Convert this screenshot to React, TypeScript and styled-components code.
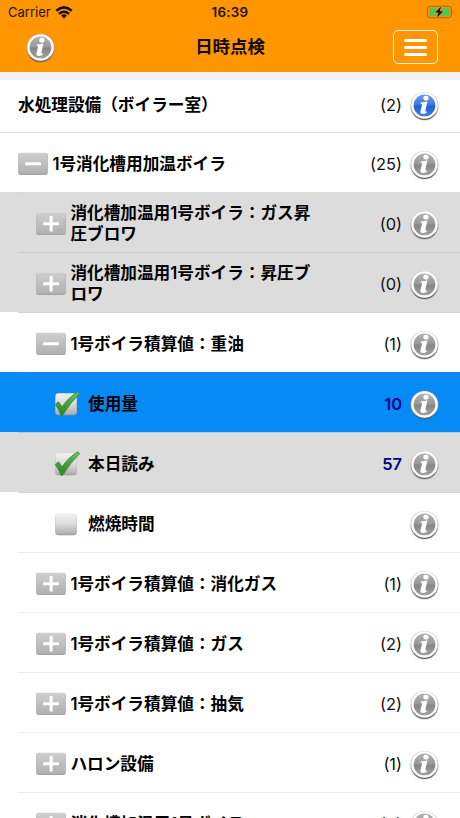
import React from 'react';
import styled, { createGlobalStyle } from 'styled-components';

const GlobalStyle = createGlobalStyle`
  * { box-sizing: border-box; }
  body {
    margin: 0;
    background: #fff;
    color: #000;
    font-family: Inter, "Noto Sans CJK JP", sans-serif;
    overflow: hidden;
  }
  svg { display: block; }
`;

const Screen = styled.div`
  width: 460px;
  height: 818px;
  overflow: hidden;
  background: #fff;
`;

const Header = styled.header`
  height: 72px;
  background: #ff9500;
`;

const StatusBar = styled.div`
  height: 24px;
  display: grid;
  grid-template-columns: 1fr 38px 1fr;
  align-items: center;
  padding: 0 5px 0 5px;
  font-size: 13px;
  line-height: 24px;
`;

const Carrier = styled.div`
  display: flex;
  align-items: center;
  gap: 4px;
  padding-left: 3px;
  color: #1f1200;
`;

const Clock = styled.div`
  font-weight: 600;
  font-size: 13.3px;
  letter-spacing: 0.3px;
  text-align: center;
  color: #1f1200;
`;

const BatterySlot = styled.div`
  justify-self: end;
`;

const NavBar = styled.div`
  height: 48px;
  display: grid;
  grid-template-columns: 1fr auto 1fr;
  align-items: center;
  padding: 0 22px 2px 22px;
`;

const NavInfo = styled.div`
  padding: 2px 0 0 4px;
`;

const Title = styled.h1`
  margin: 0;
  font-size: 17.4px;
  line-height: 24px;
  font-weight: 600;
  color: #140b00;
`;

const MenuButton = styled.button`
  justify-self: end;
  width: 45px;
  height: 34px;
  padding: 0;
  display: flex;
  flex-direction: column;
  align-items: center;
  justify-content: center;
  gap: 4px;
  border: 1px solid #fff4e3;
  border-radius: 5px;
  background: transparent;
`;

const MenuBar = styled.span`
  width: 23px;
  height: 3px;
  border-radius: 1.5px;
  background: #fff;
`;

const Gap = styled.div`
  height: 8px;
  background: #efeff4;
`;

const Row = styled.div<{ $bg: string; $h: number; $indent: number; $line: string; $inset: number; $top: number; $bottom: number }>`
  height: ${(p) => p.$h}px;
  display: flex;
  align-items: center;
  padding: ${(p) => p.$top}px 21px ${(p) => p.$bottom}px ${(p) => p.$indent}px;
  background-color: ${(p) => p.$bg};
  background-image: linear-gradient(${(p) => p.$line}, ${(p) => p.$line});
  background-repeat: no-repeat;
  background-size: 100% 1px;
  background-position: ${(p) => p.$inset}px 0;
`;

const ToggleSlot = styled.div`
  width: 34.4px;
  flex: none;
`;

const CheckSlot = styled.div`
  width: 34px;
  flex: none;
`;

const Label = styled.div`
  width: 248px;
  font-size: 16.65px;
  line-height: 21px;
  font-weight: 600;
  line-break: anywhere;
`;

const Count = styled.div<{ $value: boolean }>`
  margin-left: auto;
  margin-right: 8px;
  font-size: 16.4px;
  line-height: 20px;
  font-weight: ${(p) => (p.$value ? 600 : 400)};
  color: ${(p) => (p.$value ? '#00008b' : '#111')};
`;

const InfoSlot = styled.div`
  flex: none;
  padding-top: 2px;
  width: 29px;
`;

const Hidden = styled.div`
  height: 0;
  overflow: hidden;
`;

const Defs = () => (
  <svg width="0" height="0">
    <defs>
      <linearGradient id="ring" x1="0" y1="0" x2="0" y2="1">
        <stop offset="0" stopColor="#c4c4c4" />
        <stop offset="0.6" stopColor="#a4a4a4" />
        <stop offset="1" stopColor="#5c5c5c" />
      </linearGradient>
      <linearGradient id="grayDisc" x1="0" y1="0" x2="0" y2="1">
        <stop offset="0" stopColor="#b2b2b2" />
        <stop offset="0.48" stopColor="#989898" />
        <stop offset="0.52" stopColor="#858585" />
        <stop offset="1" stopColor="#a0a0a0" />
      </linearGradient>
      <linearGradient id="blueDisc" x1="0" y1="0" x2="0" y2="1">
        <stop offset="0" stopColor="#6c9ee6" />
        <stop offset="0.48" stopColor="#3c78d8" />
        <stop offset="0.52" stopColor="#1f5fd0" />
        <stop offset="1" stopColor="#3b80ec" />
      </linearGradient>
      <linearGradient id="tile" x1="0" y1="0" x2="0" y2="1">
        <stop offset="0" stopColor="#cfcfcf" />
        <stop offset="1" stopColor="#b0b0b0" />
      </linearGradient>
      <linearGradient id="box" x1="0" y1="0" x2="0" y2="1">
        <stop offset="0" stopColor="#f1f1f1" />
        <stop offset="0.5" stopColor="#dcdcdc" />
        <stop offset="1" stopColor="#adadad" />
      </linearGradient>
      <linearGradient id="tick" x1="0" y1="0" x2="0" y2="1">
        <stop offset="0" stopColor="#6cc75c" />
        <stop offset="0.5" stopColor="#3ea43a" />
        <stop offset="1" stopColor="#23851f" />
      </linearGradient>
    </defs>
  </svg>
);

const InfoIcon = ({ blue = false }: { blue?: boolean }) => (
  <svg width="29" height="30" viewBox="0 0 28 29">
    <ellipse cx="14" cy="15.2" rx="13.6" ry="13.6" fill="#000" opacity="0.13" />
    <circle cx="14" cy="14.5" r="13.5" fill="url(#ring)" />
    <circle cx="14" cy="14" r="12.8" fill="#fff" />
    <circle cx="14" cy="14" r="10.5" fill={blue ? 'url(#blueDisc)' : 'url(#grayDisc)'} />
    <ellipse cx="15.4" cy="6.9" rx="2.5" ry="2.3" fill="#fff" />
    <path d="M10.4 11 L16.9 10.2 L14.8 19 Q14.6 20.1 16.3 19.5 L16 21.2 Q13.5 22.7 11.3 22.2 Q9.7 21.7 10.1 19.6 L11.6 13.2 Q11.8 12.3 10.1 12.4 Z" fill="#fff" />
  </svg>
);

const ToggleIcon = ({ open }: { open: boolean }) => (
  <svg width="30" height="24" viewBox="0 0 30 24">
    <rect x="0.3" y="1" width="29.4" height="22" rx="2.2" fill="#9e9e9e" />
    <rect x="0.3" y="0.7" width="29.1" height="21.5" rx="2.2" fill="url(#tile)" />
    <rect x="7.2" y="10.3" width="15.8" height="3" rx="0.5" fill="#fff" />
    {!open && <rect x="13.6" y="4" width="3" height="15.5" rx="0.5" fill="#fff" />}
  </svg>
);

const CheckIcon = ({ checked }: { checked: boolean }) => (
  <svg width="28" height="28" viewBox="0 0 28 28">
    <rect x="1.4" y="4" width="21.3" height="21.3" rx="3.2" fill="#999" />
    <rect x="1.4" y="3.2" width="21.3" height="21.2" rx="3.2" fill="url(#box)" />
    {checked && (
      <path
        d="M1.3 14.4 L4.3 11.7 Q6.6 13.9 8 17.1 Q13.8 7.7 23.8 1.8 L25.8 3.5 Q16.5 12.5 9.2 24.5 L7.2 25.7 Q4.9 19.3 1.3 14.4 Z"
        fill="url(#tick)"
        stroke="#3b7638"
        strokeWidth="0.7"
      />
    )}
  </svg>
);

const WifiIcon = () => (
  <svg width="18" height="13" viewBox="0 0 18 13" fill="none" stroke="#180e00" strokeWidth="2.5">
    <path d="M1.3 4.7 Q9 -1.9 16.7 4.7" />
    <path d="M4 7.9 Q9 3.7 14 7.9" />
    <path d="M9 12.4 L6.1 9.5 Q9 7.2 11.9 9.5 Z" fill="#180e00" stroke="none" />
  </svg>
);

const BatteryIcon = () => (
  <svg width="28" height="14" viewBox="0 0 28 14">
    <rect x="0.5" y="1.2" width="23.8" height="11.6" rx="3" fill="none" stroke="#9c641c" />
    <path d="M25.6 5 Q27.3 7 25.6 9 Z" fill="#9c641c" />
    <rect x="2.2" y="2.8" width="20.4" height="8.4" rx="1.6" fill="#4fc65a" />
    <path d="M14.2 1.6 L8.2 7.6 H11.5 L10 12.5 L16.2 6.3 H12.8 Z" fill="#111" stroke="#ff9500" strokeWidth="1.6" paintOrder="stroke" />
  </svg>
);

type Item = {
  label: string;
  level: 0 | 1 | 2 | 3;
  count?: string;
  open?: boolean;
  checked?: boolean;
  value?: boolean;
  blue?: boolean;
  bg?: string;
  line?: string;
  height?: number;
  inset?: number;
  top?: number;
  bottom?: number;
};

const GRAY = '#dcdcdc';

const items: Item[] = [
  { label: '水処理設備（ボイラー室）', level: 0, count: '(2)', blue: true, height: 52, top: 0, bottom: 2, line: '#fff' },
  { label: '1号消化槽用加温ボイラ', level: 1, open: true, count: '(25)', inset: 0, line: '#dcdcde' },
  { label: '消化槽加温用1号ボイラ：ガス昇圧ブロワ', level: 2, count: '(0)', bg: GRAY, line: '#d8d8d8' },
  { label: '消化槽加温用1号ボイラ：昇圧ブロワ', level: 2, count: '(0)', bg: GRAY, line: '#cdcdcd' },
  { label: '1号ボイラ積算値：重油', level: 2, open: true, count: '(1)', line: '#d4d4d4' },
  { label: '使用量', level: 3, checked: true, count: '10', value: true, bg: '#068af5', line: '#1689ea' },
  { label: '本日読み', level: 3, checked: true, count: '57', value: true, bg: GRAY, line: '#b9c9d6' },
  { label: '燃焼時間', level: 3, checked: false, line: '#d4d4d4' },
  { label: '1号ボイラ積算値：消化ガス', level: 2, count: '(1)' },
  { label: '1号ボイラ積算値：ガス', level: 2, count: '(2)' },
  { label: '1号ボイラ積算値：抽気', level: 2, count: '(2)' },
  { label: 'ハロン設備', level: 2, count: '(1)' },
  { label: '消化槽加温用1号ボイラ', level: 2, count: '(0)' },
];

const indents = [18, 18, 36, 54];

const ListRow = ({ item }: { item: Item }) => (
  <Row
    $bg={item.bg ?? '#fff'}
    $h={item.height ?? 60}
    $indent={indents[item.level]}
    $line={item.line ?? '#ececec'}
    $inset={item.inset ?? 18}
    $top={item.top ?? 4}
    $bottom={item.bottom ?? 0}
  >
    {(item.level === 1 || item.level === 2) && (
      <ToggleSlot>
        <ToggleIcon open={!!item.open} />
      </ToggleSlot>
    )}
    {item.level === 3 && (
      <CheckSlot>
        <CheckIcon checked={!!item.checked} />
      </CheckSlot>
    )}
    <Label>{item.label}</Label>
    <Count $value={!!item.value}>{item.count}</Count>
    <InfoSlot>
      <InfoIcon blue={item.blue} />
    </InfoSlot>
  </Row>
);

export default function App() {
  return (
    <Screen>
      <GlobalStyle />
      <Hidden>
        <Defs />
      </Hidden>
      <Header>
        <StatusBar>
          <Carrier>
            Carrier
            <WifiIcon />
          </Carrier>
          <Clock>16:39</Clock>
          <BatterySlot>
            <BatteryIcon />
          </BatterySlot>
        </StatusBar>
        <NavBar>
          <NavInfo>
            <InfoIcon />
          </NavInfo>
          <Title>日時点検</Title>
          <MenuButton aria-label="menu">
            <MenuBar />
            <MenuBar />
            <MenuBar />
          </MenuButton>
        </NavBar>
      </Header>
      <Gap />
      {items.map((item, i) => (
        <ListRow key={i} item={item} />
      ))}
    </Screen>
  );
}
